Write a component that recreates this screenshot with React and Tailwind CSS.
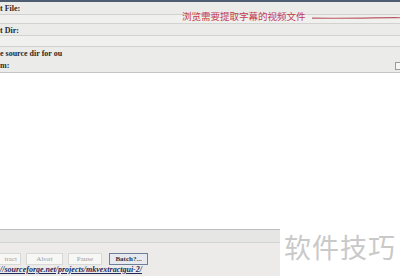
import React from 'react';

const Row = ({ children, className = '' }) => (
  <div className={`flex items-center border-b border-[#d2d2d0] ${className}`}>{children}</div>
);

export default function App() {
  const font = { fontFamily: '"Liberation Serif", "DejaVu Serif", serif' };
  return (
    <div className="w-[400px] h-[276px] bg-white overflow-hidden flex flex-col" style={font}>
      {/* top form */}
      <div className="relative border-t-2 border-[#4f5d72] bg-[#ebebe9] border-b border-b-[#c4c4c2]">
        <Row className="h-[13px] pt-[2px]">
          <span className="text-[8px] font-bold text-[#2a2a2a] leading-none">t File:</span>
        </Row>
        <Row className="h-[9px] bg-[#f0f0ee]" />
        <Row className="h-[12px] pt-[3px]">
          <span className="text-[8px] font-bold text-[#2a2a2a] leading-none">t Dir:</span>
        </Row>
        <Row className="h-[11px] bg-[#f0f0ee]" />
        <div className="h-[12px] flex items-end pb-[1px]">
          <span className="text-[8px] font-bold text-[#2a2a2a] leading-none">e source dir for ou</span>
        </div>
        <div className="h-[13px] flex items-center justify-between pt-[1px]">
          <span className="text-[8px] font-bold text-[#2a2a2a] leading-none">m:</span>
          <div className="w-[7px] h-[8px] border border-[#9a9a9a] bg-[#f6f6f6] -mr-[2px]" />
        </div>

        {/* annotation over the form */}
        <div className="absolute left-[182px] top-[10px] flex items-center whitespace-nowrap">
          <span className="text-[9.5px] text-[#c23a4e] leading-none" style={{ fontFamily: '"Noto Sans CJK SC", sans-serif' }}>
            浏览需要提取字幕的视频文件
          </span>
          <svg className="ml-[6px] mt-[3px] shrink-0" width="97" height="4" viewBox="0 0 97 4">
            <path d="M0 2.2 Q40 2.4 60 1.9 Q80 1.6 97 1.8" stroke="#b85a66" strokeWidth="1.2" fill="none" />
          </svg>
        </div>
      </div>

      {/* empty body */}
      <div className="flex-1" />

      {/* bottom bar */}
      <div className="flex h-[47px]">
        <div className="w-[280px] bg-[#ecebea] border-t border-[#bdbdbd] flex flex-col">
          <div className="h-[13px] bg-[#e6e6e5] border-b border-[#d4d4d2]" />
          <div className="flex items-center gap-[5px] mt-[10px] h-[12px]">
            <div className="w-[21px] h-full bg-[#f7f7f6] border border-l-0 border-[#d8d8d6] text-[7px] text-[#9c9c9c] flex items-center justify-end pr-[3px]">tract</div>
            <div className="w-[37px] h-full bg-[#f7f7f6] border border-[#d8d8d6] text-[7px] text-[#9c9c9c] flex items-center justify-center">Abort</div>
            <div className="w-[34px] h-full bg-[#f7f7f6] border border-[#d8d8d6] text-[7px] text-[#9c9c9c] flex items-center justify-center">Pause</div>
            <div className="w-[39px] h-full ml-[2px] bg-[#e6eaf0] border border-[#6d7f99] text-[7px] font-bold text-[#2c3344] flex items-center justify-center">Batch?...</div>
          </div>
          <div className="mt-[1px] text-[8px] font-bold italic text-[#1d2a5c] underline leading-none whitespace-nowrap">
            //sourceforge.net/projects/mkvextractgui-2/
          </div>
        </div>
        <div className="flex-1 bg-white flex items-start pt-[4px] pl-[4px]">
          <span className="text-[27px] text-[#c9c9c9] leading-none tracking-[1px]" style={{ fontFamily: '"Noto Sans CJK SC", sans-serif' }}>
            软件技巧
          </span>
        </div>
      </div>
    </div>
  );
}
